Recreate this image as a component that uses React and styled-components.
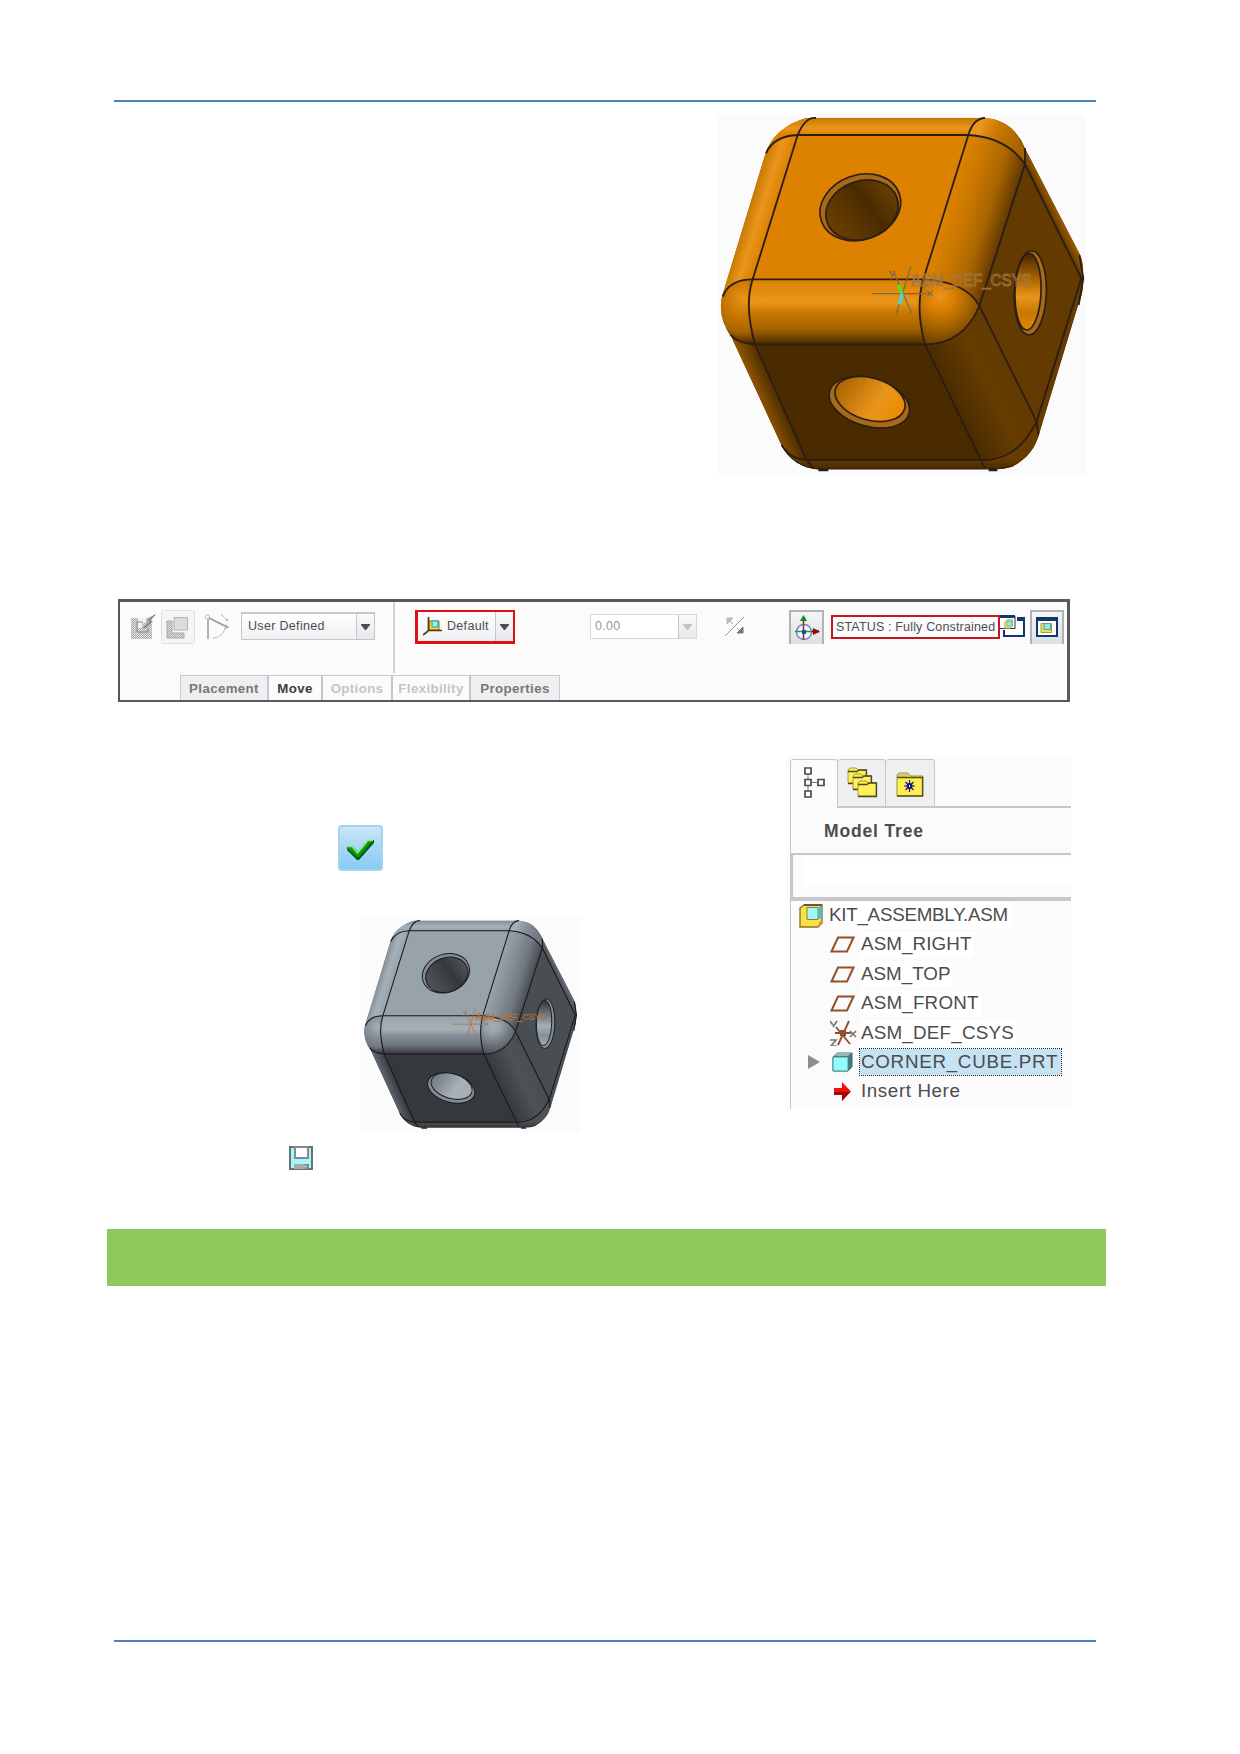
import React from "react";
import styled, { createGlobalStyle } from "styled-components";

const Global = createGlobalStyle`
  * { box-sizing: border-box; }
  body { margin: 0; background: #fff; font-family: "Liberation Sans", Arial, sans-serif; }
  svg { display: block; flex: none; }
`;

const Page = styled.main`
  width: 1240px;
  height: 1754px;
  padding: 100px 134px 0 107px;
  background: #fff;
  display: flex;
  flex-direction: column;
`;
const Rule = styled.hr`
  margin: ${p => p.$top || 0}px 0 0 7px;
  width: 982px;
  height: 2px;
  flex: none;
  border: 0;
  background: #4f81bd;
`;
const Figure = styled.figure`
  margin: ${p => p.$m};
  flex: none;
`;
const Banner = styled.div`
  height: 57px;
  margin-top: 59px;
  flex: none;
  background: #8dc95c;
`;

/* ---------- dashboard toolbar ---------- */
const Dashboard = styled.section`
  margin: 123px 0 0 11px;
  width: 952px;
  height: 103px;
  flex: none;
  border: solid #58595b;
  border-width: 3px 3px 2px 2px;
  background: #fbfbfb;
  display: flex;
  flex-direction: column;
  justify-content: space-between;
`;
const Tools = styled.div`
  display: flex;
  align-items: flex-start;
  height: 71px;
  padding-left: 11px;
`;
const Slot = styled.div`
  margin: ${p => p.$t}px 0 0 ${p => p.$l || 0}px;
  flex: none;
`;
const FlatButton = styled.div`
  width: 34px;
  height: 34px;
  margin: 8px 0 0 5px;
  padding: 6px 0 0 4px;
  border: 1px solid #dcdee0;
  border-radius: 3px;
  background: #f4f5f6;
`;
const PressedButton = styled.div`
  width: ${p => p.$w}px;
  height: 34px;
  margin: 8px 0 0 ${p => p.$l}px;
  padding: ${p => p.$pad};
  border: 2px solid #b0b2b5;
  border-bottom: 0;
  background: linear-gradient(#f5f5f6, #dddfe2);
  flex: none;
`;
const Combo = styled.div`
  display: flex;
  flex: none;
  width: ${p => p.$w}px;
  height: ${p => p.$h}px;
  margin: ${p => p.$t}px 0 0 ${p => p.$l}px;
  border: solid ${p => p.$line};
  border-width: ${p => p.$bw || "1px"};
  background: ${p => p.$bg || "linear-gradient(#fff, #eff0f2)"};
  color: ${p => p.$color || "#4d4d4f"};
  font-size: 12.5px;
  letter-spacing: 0.32px;
`;
const ComboText = styled.div`
  flex: 1;
  display: flex;
  align-items: center;
  gap: 4px;
  padding: 0 0 1px ${p => p.$pad}px;
  white-space: nowrap;
`;
const ComboArrow = styled.div`
  width: 18px;
  display: flex;
  align-items: center;
  justify-content: center;
  border-left: 1px solid #c3c6ca;
  background: linear-gradient(#fafafa, #e6e8eb);
`;
const Divider = styled.div`
  width: 2px;
  height: 71px;
  margin-left: 18px;
  background: #d0d2d4;
`;
const Status = styled.div`
  width: 169px;
  height: 24px;
  margin: 13px 0 0 7px;
  border: 2px solid #c4161c;
  font-size: 12.5px;
  letter-spacing: 0.16px;
  line-height: 21px;
  padding-left: 3px;
  color: #4d4d4f;
  white-space: nowrap;
  flex: none;
`;
const Tabs = styled.nav`
  display: flex;
  height: 25px;
  margin-left: 60px;
`;
const Tab = styled.div`
  width: ${p => p.$w}px;
  padding-top: 4px;
  text-align: center;
  border: solid #c5c7ca;
  border-width: 1px 1px 0 ${p => (p.$first ? 1 : 0)}px;
  border-right-width: ${p => (p.$last ? 1 : 2)}px;
  font-weight: bold;
  font-size: 13.3px;
  line-height: 17px;
  letter-spacing: 0.36px;
  color: ${p => p.$color};
  background: ${p => p.$bg || "#fbfbfb"};
`;

/* ---------- lower row ---------- */
const Lower = styled.section`
  display: flex;
  height: 468px;
  flex: none;
`;
const Steps = styled.div`
  width: 679px;
  display: flex;
  flex-direction: column;
  align-items: flex-start;
`;
const Confirm = styled.div`
  width: 45px;
  height: 46px;
  margin: 123px 0 0 231px;
  flex: none;
  border: 2px solid #a6d3ee;
  border-radius: 4px;
  background: linear-gradient(#cbe6f8, #a9d8f6 45%, #87cbf5);
`;
const Panel = styled.aside`
  width: 285px;
  height: 354px;
  margin-top: 53px;
  padding: 4px 0 0 4px;
  background: #fbfbfb;
`;
const PanelTabs = styled.div`
  display: flex;
  height: 49px;
`;
const PanelTab = styled.div`
  width: ${p => p.$w}px;
  padding: ${p => p.$pad};
  border: solid #c5c8cb;
  border-width: ${p => (p.$active ? "1px 1px 0 1px" : "1px 1px 2px 0")};
  border-radius: 3px 3px 0 0;
  background: ${p => (p.$active ? "#fbfbfb" : "#eeeff1")};
`;
const TabFill = styled.div`
  flex: 1;
  border-bottom: 2px solid #c5c8cb;
`;
const PanelTitle = styled.h2`
  margin: 0;
  height: 45px;
  padding: 13px 0 0 33px;
  border-left: 1px solid #c5c8cb;
  font-size: 17.5px;
  line-height: 20px;
  letter-spacing: 0.85px;
  color: #4d4d4f;
`;
const FilterBox = styled.div`
  height: 48px;
  border: solid #c5c8cb;
  border-width: 2px 0 4px 3px;
  padding: 2px 0 0 11px;
`;
const FilterInput = styled.div`
  height: 29px;
  background: #fff;
`;
const Tree = styled.ul`
  list-style: none;
  margin: 0;
  padding: 0;
  height: 208px;
  border-left: 1px solid #c5c8cb;
`;
const TreeRow = styled.li`
  height: 29.3px;
  padding-left: ${p => p.$indent}px;
  display: flex;
  align-items: center;
`;
const TreeLabel = styled.span`
  margin-left: ${p => p.$gap}px;
  padding: 0 3px 0 1px;
  height: 26px;
  line-height: ${p => p.$lh || 25}px;
  font-size: 18.8px;
  letter-spacing: ${p => p.$track || 0}px;
  white-space: nowrap;
  color: #4c4c50;
  background: ${p => (p.$selected ? "#c5e3f3" : p.$plain ? "none" : "#fff")};
  outline: ${p => (p.$selected ? "1px dotted #222" : "none")};
`;

/* ---------- cube drawing ---------- */
const orange = {
  top: "#dc8200", hi: "#ea951c", mid: "#a86400", side: "#633a00", front: "#4a2b00",
  rim: "#c87700", ring: "#a96a18", line: "#2b1d17", hole: "#6b4000", holeHi: "#e98b00", soft: "#663c00",
};
const gray = {
  top: "#98a2aa", hi: "#a5b0b8", mid: "#707880", side: "#494e52", front: "#36393c",
  rim: "#858f97", ring: "#858c93", line: "#17191f", hole: "#505458", holeHi: "#a2adb6", soft: "#4d5256",
};

function CubeShape({ id, c }) {
  const u = n => `url(#${id}-${n})`;
  const G = ({ n, v, stops }) => (
    <linearGradient id={`${id}-${n}`} gradientUnits="userSpaceOnUse" x1={v[0]} y1={v[1]} x2={v[2]} y2={v[3]}>
      {stops.map(([o, col]) => <stop key={o} offset={o} stopColor={col} />)}
    </linearGradient>
  );
  const outline = "M292 38H825Q912 46 945 130L1108 445Q1122 470 1119 520Q1122 560 1106 595L988 985Q970 1055 910 1083Q885 1092 850 1092H320Q250 1085 215 1022L65 698Q20 635 37 570L165 150Q190 66 292 38Z";
  return (
    <g>
      <defs>
        <clipPath id={`${id}-clip`}><path d={outline} /></clipPath>
        {G({ n: "back", v: [0, 38, 0, 90], stops: [[0, c.rim], [0.6, c.hi], [1, c.top]] })}
        {G({ n: "left", v: [195, 306, 122, 283], stops: [[0, c.top], [0.5, c.hi], [1, c.rim]] })}
        {G({ n: "tr", v: [708, 306, 885, 361], stops: [[0, c.top], [0.35, c.rim], [0.68, c.mid], [1, c.side]] })}
        {G({ n: "band", v: [0, 523, 0, 718], stops: [[0, c.top], [0.35, c.hi], [0.52, c.rim], [0.75, c.mid], [1, c.front]] })}
        {G({ n: "fr", v: [728, 892, 906, 807], stops: [[0, c.front], [0.6, c.soft], [1, c.side]] })}
        {G({ n: "lf", v: [215, 890, 140, 922], stops: [[0, c.front], [1, c.mid]] })}
        {G({ n: "bot", v: [0, 1062, 0, 1092], stops: [[0, c.soft], [1, c.front]] })}
        {G({ n: "h1", v: [350, 340, 565, 280], stops: [[0, c.hole], [0.6, c.front], [1, c.hole]] })}
        {G({ n: "h2", v: [380, 850, 585, 920], stops: [[0, c.mid], [0.6, c.hi], [1, c.holeHi]] })}
        {G({ n: "h3", v: [950, 450, 950, 680], stops: [[0, c.front], [0.3, c.mid], [0.55, c.hi], [0.75, c.rim], [1, c.holeHi]] })}
        {G({ n: "rt", v: [1030, 350, 1060, 335], stops: [[0, c.side], [1, c.mid]] })}
        {G({ n: "ctr", v: [810, 70, 930, 120], stops: [[0, c.hi], [0.4, c.rim], [1, c.mid]] })}
        <radialGradient id={`${id}-ball`} gradientUnits="userSpaceOnUse" cx="690" cy="575" r="150">
          <stop offset="0" stopColor={c.hi} /><stop offset=".25" stopColor={c.top} />
          <stop offset=".6" stopColor={c.mid} /><stop offset="1" stopColor={c.side} />
        </radialGradient>
        <radialGradient id={`${id}-lball`} gradientUnits="userSpaceOnUse" cx="100" cy="580" r="135">
          <stop offset="0" stopColor={c.hi} /><stop offset=".4" stopColor={c.rim} />
          <stop offset=".75" stopColor={c.mid} /><stop offset="1" stopColor={c.front} />
        </radialGradient>
      </defs>
      <g clipPath={u("clip")}>
        <path d={outline} fill={c.side} />
        <path d="M930 100L1130 440V540H1108L945 178Z" fill={u("rt")} />
        <path d="M1114 520L980 950L985 1000L1125 580Z" fill={c.soft} />
        <path d="M250 30H850L775 91H160Z" fill={u("back")} />
        <path d="M100 90H264L128 524L100 620H0V524Z" fill={u("left")} />
        <path d="M160 150Q180 60 300 30Q275 55 263 90Q195 95 168 140Z" fill={u("back")} />
        <path d="M263 90H775L640 524H128Z" fill={c.top} />
        <path d="M775 90Q890 100 945 178L808 603Q760 530 640 523Z" fill={u("tr")} />
        <path d="M775 90Q790 40 825 30Q930 40 950 178Q890 95 775 90Z" fill={u("ctr")} />
        <path d="M30 700L140 716L292 1065L200 1065Z" fill={u("lf")} />
        <path d="M140 716H645L812 1065H292Z" fill={c.front} />
        <path d="M645 718Q760 710 808 603L980 950Q920 1060 812 1065Z" fill={u("fr")} />
        <path d="M200 1020Q230 1062 292 1063H825Q920 1060 980 950L1000 1000L900 1100H200Z" fill={u("bot")} />
        <path d="M118 523H635Q620 610 645 719H135Q105 620 118 523Z" fill={u("band")} />
        <path d="M20 600Q45 526 128 523Q102 620 135 719Q65 719 20 650Z" fill={u("lball")} />
        <path d="M640 523Q760 530 808 603Q770 710 645 719Q617 610 640 523Z" fill={u("ball")} />
      </g>
      <g fill="none" stroke={c.line} strokeWidth="5.5">
        <path d="M168 145Q190 93 263 90H775Q890 97 945 178L1114 520L980 950Q925 1060 830 1065H290Q240 1062 215 1020" />
        <path d="M318 39Q286 35 263 90L128 523Q102 600 135 718L290 1065L310 1090" />
        <path d="M825 39Q790 40 775 90L640 523Q615 610 645 718L825 1090" />
        <path d="M38 575Q58 523 128 523H640Q770 530 808 603Q760 718 645 718H135Q85 716 62 690" />
        <path d="M945 130V178L808 603L980 950L985 990M1108 450L1120 520L1106 600" />
      </g>
      <path d="M215 1022Q250 1085 320 1092H850Q885 1092 910 1083" fill="none" stroke={c.line} strokeWidth="3" />
      <g stroke={c.line} strokeWidth="5">
        <ellipse cx="451" cy="307" rx="124" ry="97" transform="rotate(-20 451 307)" fill={c.ring} />
        <ellipse cx="456" cy="315" rx="111" ry="87" transform="rotate(-20 456 315)" fill={u("h1")} />
        <ellipse cx="478" cy="892" rx="124" ry="72" transform="rotate(16 478 892)" fill={c.ring} />
        <ellipse cx="480" cy="882" rx="108" ry="63" transform="rotate(16 480 882)" fill={u("h2")} />
        <ellipse cx="961" cy="564" rx="48" ry="126" transform="rotate(2 961 564)" fill={c.ring} />
        <ellipse cx="954" cy="560" rx="39" ry="115" transform="rotate(2 954 560)" fill={u("h3")} />
      </g>
      <path d="M325 1095H355M836 1095H862" stroke="#222" strokeWidth="7" />
    </g>
  );
}

function Axes({ color, text, active }) {
  return (
    <g fill="none" stroke={color} strokeWidth="4">
      <path d="M487 566H665M550 498L605 625M602 486L557 632M652 557L668 574M668 557L652 574M538 498L548 512L556 498M548 512L542 524" />
      {active && (
        <g>
          <path d="M576 566L566 540" stroke="#5be01e" strokeWidth="11" />
          <path d="M576 566L568 598" stroke="#3fd9df" strokeWidth="10" />
          <path d="M590 566H615" stroke="#c8471a" strokeWidth="4" />
        </g>
      )}
      <path d="M608 512H632M608 528H700M608 543H650M612 512V543M660 512V543M690 512V543" stroke={text} strokeWidth="2.5" />
      <text x="603" y="544" textLength="362" lengthAdjust="spacingAndGlyphs" fontFamily="Liberation Sans" fontSize="47" stroke={text} strokeWidth="2.4">ASM_DEF_CSYS</text>
    </g>
  );
}

/* ---------- small drawings ---------- */
const Arrow = ({ color = "#4d4d4f" }) => <svg width="9" height="6"><path d="M0 0H9V1L5 6H4L0 1Z" fill={color} /></svg>;

const SketchIcon = () => (
  <svg width="25" height="25">
    <defs><pattern id="dots" width="2" height="2" patternUnits="userSpaceOnUse"><rect width="2" height="2" fill="#e2e2e2" /><path d="M0 0h1v1H0zM1 1h1v1H1z" fill="#a8a8a8" /></pattern></defs>
    <path d="M0 4H21V25H0Z" fill="url(#dots)" />
    <path d="M7 4H15V9H11V14H7Z" fill="#f2f2f2" />
    <path d="M6 8H12M6 8V18H17V14M12 13L16 9" stroke="#888" fill="none" />
    <path d="M25 0L17 4L15 9L11 15L18 12L22 7L20 6Z" fill="#aaa" />
    <path d="M24 1L18 6L20 8L13 14" stroke="#666" fill="none" />
  </svg>
);
const LayersIcon = () => (
  <svg width="24" height="22">
    <path d="M1 4H6V16H18V21H1Z" fill="url(#dots)" stroke="#aaa" />
    <path d="M8 0.5H21.500V13H8Z" fill="#dcdcdc" stroke="#b4b4b4" />
  </svg>
);
const AngleIcon = () => (
  <svg width="24" height="25" fill="none" stroke="#b4b4b4">
    <path d="M3 5V25" strokeWidth="2" /><path d="M4 4L22 13" stroke="#999" strokeWidth="1.6" />
    <circle cx="2.500" cy="3" r="2" fill="#fff" /><path d="M16 0L21 5M20 14Q18 23 8 24" strokeDasharray="5 1" />
    <path d="M22 5v2M20 11l3 2-3 1" strokeWidth="2" />
  </svg>
);
const DefaultIcon = () => (
  <svg width="20" height="20">
    <path d="M6 5H16V14H6Z" fill="#f5dc37" stroke="#83752b" /><path d="M9 5H15V11H9Z" fill="#8ef4f3" stroke="#37989b" />
    <path d="M5.500 1V14.500H19M5 15L0 19" stroke="#5b3512" strokeWidth="1.7" fill="none" />
  </svg>
);
const SwapIcon = () => (
  <svg width="20" height="22" stroke="#999" fill="none">
    <path d="M0 20L19 1" /><path d="M2 2L8 8" /><path d="M2 8V2H8Z" fill="#bbb" stroke="#bbb" />
    <path d="M12 12L17 17" /><path d="M18 11V17H12Z" fill="#777" stroke="#777" />
  </svg>
);
const DragIcon = () => (
  <svg width="28" height="26">
    <circle cx="10" cy="17" r="7.500" fill="#f4f6ff" stroke="#7184cb" strokeWidth="1.500" />
    <path d="M9.500 4V25" stroke="#8e2a20" strokeWidth="1.500" /><path d="M1 16.500H20" stroke="#259a3e" strokeWidth="1.500" />
    <path d="M6 6L9.500 0L13 6Z" fill="#0b8a1b" /><path d="M19 13L26 16.500L19 20Z" fill="#8d0e08" /><path d="M18 16.500H25" stroke="#8d0e08" strokeWidth="2" />
    <path d="M8 15H12V19H8Z" fill="#155392" />
  </svg>
);
const MiniCube = ({ s = 1 }) => (
  <g transform={`scale(${s})`}>
    <path d="M1 4L4 1H11V9L8 12H1Z" fill="#e5de66" stroke="#a79e38" /><path d="M4 3H10V9H4Z" fill="#85ecec" stroke="#6cb8a8" />
  </g>
);
const SeparateIcon = () => (
  <svg width="25" height="22">
    <path d="M4 3H24V21H4Z" fill="#fff" stroke="#14356f" strokeWidth="2" /><path d="M14 2H25V6H14Z" fill="#14356f" />
    <path d="M0 0H16V14H0Z" fill="#fff" stroke="#fff" strokeWidth="2" /><path d="M0 13.500H15V1" stroke="#14356f" fill="none" />
    <path d="M0 0H15V3H0Z" fill="#14356f" /><g transform="translate(4 4)"><MiniCube s={0.78} /></g>
  </svg>
);
const InWindowIcon = () => (
  <svg width="22" height="20">
    <path d="M1 1H21V19H1Z" fill="#fff" stroke="#14356f" strokeWidth="2" /><path d="M0 0H22V4H0Z" fill="#14356f" />
    <path d="M5 6.500H15.500V15.500H5Z" fill="#e5de66" stroke="#a79e38" /><path d="M8 6.500H14.500V12.500H8Z" fill="#85ecec" stroke="#6c9c88" />
  </svg>
);
const TreeIcon = () => (
  <svg width="22" height="32" fill="none" stroke="#4a4a4c">
    <path d="M4 8V24M8 15.500H14" stroke="#777" />
    <path d="M1 1H7V7H1ZM1 12.500H7V18.500H1ZM14 12.500H20V18.500H14ZM1 24H7V30H1Z" fill="#fff" strokeWidth="1.700" />
  </svg>
);
const FolderShape = () => (
  <g><path d="M0 15V2L2 0H8L10 2H18V15Z" fill="#fff058" stroke="#a29b42" /><path d="M0 3.500H9L11 2H18.500V15.500H0" fill="none" stroke="#4b481d" strokeWidth="1.300" /></g>
);
const FoldersIcon = () => (
  <svg width="31" height="32"><g transform="translate(1 1)"><FolderShape /></g><g transform="translate(6 7)"><FolderShape /></g><g transform="translate(11 14)"><FolderShape /></g></svg>
);
const FavIcon = () => (
  <svg width="28" height="25">
    <path d="M1 24V3L3 1H12L14 4H27V24Z" fill="#ffee4f" stroke="#989142" /><path d="M2 2H12V5H2Z" fill="#d3c878" />
    <path d="M1 5.500H26.500V24H1" fill="none" stroke="#55511d" strokeWidth="1.300" />
    <path d="M13.500 8V20M8 14H19M9.500 10L17.500 18M17.500 10L9.500 18" stroke="#14148c" strokeWidth="1.200" /><circle cx="13.500" cy="14" r="3" fill="#14148c" /><path d="M13 13h1v2h-1z" fill="#fff" />
  </svg>
);
const AsmIcon = () => (
  <svg width="24" height="24">
    <path d="M1 4L5 1H23V19L19 23H1Z" fill="#f7e345" stroke="#957025" strokeWidth="1.400" />
    <path d="M8 3.500H19V15.500H8Z" fill="#9ef8f8" stroke="#8c8235" /><path d="M19 4L23 1V13L19 16Z" fill="#50bfc3" />
    <path d="M5 1H23" stroke="#725038" strokeWidth="2" /><path d="M20 19L23 15V19L19 23Z" fill="#dc9920" />
  </svg>
);
const PlaneIcon = () => <svg width="25" height="17"><path d="M8 1.500H23.500L17 15.500H1.500Z" fill="none" stroke="#925128" strokeWidth="2" /></svg>;
const CsysIcon = () => (
  <svg width="27" height="26" fill="none">
    <path d="M5 13H21M6 7L20 24M19 1L8 25" stroke="#925128" strokeWidth="1.900" /><path d="M10 10H16V16H10Z" fill="#925128" />
    <path d="M0 1L3 5M7 1L3 7M0 20H6L1 26H7M20 11L26 17M26 11L20 17" stroke="#777" strokeWidth="1.700" />
  </svg>
);
const PartIcon = () => (
  <svg width="21" height="20">
    <path d="M1 5L5 1H20V15L16 19H1Z" fill="#347f82" stroke="#526c6d" /><path d="M1 5H16V19H1Z" fill="#91fcfd" stroke="#548d90" /><path d="M2 4L5 1H19L16 4Z" fill="#93b9ba" />
  </svg>
);
const ExpandIcon = () => <svg width="12" height="14"><path d="M0 0L12 7L0 14Z" fill="#8b8d90" /></svg>;
const InsertIcon = () => (
  <svg width="17" height="19"><path d="M0 6H8V0L17 9.500L8 19V13H0Z" fill="#ef1010" /><path d="M0 10H16L8 19V13H0Z" fill="#9c0707" /></svg>
);
const CheckIcon = () => (
  <svg width="41" height="42">
    <path d="M7 20H13L18 25L28 13H34V16L19 33H17L7 23Z" fill="#075c16" />
    <path d="M7 19H12L18 26L28 13H33L19 30H17L7 21Z" fill="#0f9414" />
    <path d="M7 19.500H12L17.500 26L28 13.500H33" fill="none" stroke="#7df06b" strokeWidth="1.500" />
  </svg>
);
const SaveIcon = () => (
  <svg width="24" height="24">
    <path d="M1 1H23V23H1Z" fill="#a2fafa" stroke="#677277" strokeWidth="2" />
    <path d="M6 1H19V12H6Z" fill="#fff" stroke="#858a8c" strokeWidth="2" /><path d="M5 18H20V23H5Z" fill="#aaa" /><path d="M16 18H20V23H16Z" fill="#888" /><path d="M16 20.500h2" stroke="#ddd" />
  </svg>
);

const tabs = [
  { t: "Placement", w: 89, color: "#77787b", bg: "#eeeff1", first: true },
  { t: "Move", w: 54, color: "#3d3d3f" },
  { t: "Options", w: 70, color: "#c3c5c8" },
  { t: "Flexibility", w: 78, color: "#c3c5c8" },
  { t: "Properties", w: 89, color: "#77787b", bg: "#eeeff1", last: true },
];

const nodes = [
  { t: "KIT_ASSEMBLY.ASM", icon: <AsmIcon />, indent: 8, gap: 5, track: -0.26, lh: 23 },
  { t: "ASM_RIGHT", icon: <PlaneIcon />, indent: 39, gap: 5, track: 0.1, lh: 24 },
  { t: "ASM_TOP", icon: <PlaneIcon />, indent: 39, gap: 5 },
  { t: "ASM_FRONT", icon: <PlaneIcon />, indent: 39, gap: 5, track: 0.2, lh: 24 },
  { t: "ASM_DEF_CSYS", icon: <CsysIcon />, indent: 39, gap: 3, track: 0.22 },
  { t: "CORNER_CUBE.PRT", icon: <PartIcon />, indent: 17, gap: 7, track: 0.72, expand: true, selected: true },
  { t: "Insert Here", icon: <InsertIcon />, indent: 43, gap: 9, track: 0.6, plain: true },
];

const ExpandSlot = styled.span`
  width: 24px;
`;

export default function App() {
  return (
    <Page>
      <Global />
      <Rule />
      <Figure $m="12px 0 0 611px">
        <svg width="368" height="362" viewBox="24 27 1104 1086">
          <rect x="24" y="27" width="1104" height="1086" fill="#fbfbfb" />
          <CubeShape id="co" c={orange} />
          <Axes color="#82694a" text="#a47845" active />
        </svg>
      </Figure>
      <Dashboard>
        <Tools>
          <Slot $t={12}><SketchIcon /></Slot>
          <FlatButton><LayersIcon /></FlatButton>
          <Slot $t={12} $l={10}><AngleIcon /></Slot>
          <Combo $w={134} $h={28} $t={10} $l={12} $line="#c3c6ca" $bw="2px 1px 1px">
            <ComboText $pad={6}>User Defined</ComboText>
            <ComboArrow><Arrow /></ComboArrow>
          </Combo>
          <Divider />
          <Combo $w={100} $h={34} $t={8} $l={20} $line="#e01010" $bw="2px 2px 3px 3px">
            <ComboText $pad={5}><DefaultIcon />Default</ComboText>
            <ComboArrow><Arrow /></ComboArrow>
          </Combo>
          <Combo $w={107} $h={25} $t={12} $l={75} $line="#d8dadd" $bg="#fff" $color="#98999b">
            <ComboText $pad={4}>0.00</ComboText>
            <ComboArrow><Arrow color="#bfc1c4" /></ComboArrow>
          </Combo>
          <Slot $t={14} $l={28}><SwapIcon /></Slot>
          <PressedButton $w={35} $l={44} $pad="3px 0 0 3px"><DragIcon /></PressedButton>
          <Status>STATUS : Fully Constrained</Status>
          <Slot $t={13}><SeparateIcon /></Slot>
          <PressedButton $w={34} $l={5} $pad="5px 0 0 4px"><InWindowIcon /></PressedButton>
        </Tools>
        <Tabs>
          {tabs.map(x => (
            <Tab key={x.t} $w={x.w} $color={x.color} $bg={x.bg} $first={x.first} $last={x.last}>{x.t}</Tab>
          ))}
        </Tabs>
      </Dashboard>
      <Lower>
        <Steps>
          <Confirm><CheckIcon /></Confirm>
          <Figure $m="46px 0 0 253px">
            <svg width="221" height="216" viewBox="30 37 663 648">
              <rect x="30" y="37" width="663" height="648" fill="#fbfbfb" />
              <g transform="translate(23.7 25) scale(.5855 .589)">
                <CubeShape id="cg" c={gray} />
                <Axes color="#b7713a" text="#b7713a" />
              </g>
            </svg>
          </Figure>
          <Figure $m="13px 0 0 182px"><SaveIcon /></Figure>
        </Steps>
        <Panel>
          <PanelTabs>
            <PanelTab $active $w={48} $pad="7px 0 0 13px"><TreeIcon /></PanelTab>
            <PanelTab $w={48} $pad="7px 0 0 9px"><FoldersIcon /></PanelTab>
            <PanelTab $w={49} $pad="12px 0 0 10px"><FavIcon /></PanelTab>
            <TabFill />
          </PanelTabs>
          <PanelTitle>Model Tree</PanelTitle>
          <FilterBox><FilterInput /></FilterBox>
          <Tree>
            {nodes.map(n => (
              <TreeRow key={n.t} $indent={n.indent}>
                {n.expand && <ExpandSlot><ExpandIcon /></ExpandSlot>}
                {n.icon}
                <TreeLabel $gap={n.gap} $track={n.track} $lh={n.lh} $selected={n.selected} $plain={n.plain}>{n.t}</TreeLabel>
              </TreeRow>
            ))}
          </Tree>
        </Panel>
      </Lower>
      <Banner />
      <Rule $top={354} />
    </Page>
  );
}
